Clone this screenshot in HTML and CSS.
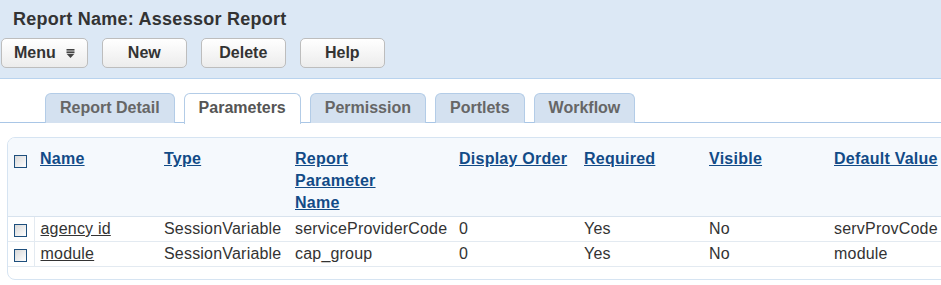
FILE: index.html
```html
<!DOCTYPE html>
<html lang="en">
<head>
    <meta charset="UTF-8">
    <meta name="viewport" content="width=device-width, initial-scale=1.0">
    <title>Report Parameters</title>
    <link rel="stylesheet" href="styles.css">
</head>
<body>
    <div class="top">
        <h1 class="title">Report Name: Assessor Report</h1>
        <div class="btns">
            <button class="btn">Menu
                <svg class="menu-ico" width="9" height="9" viewBox="0 0 9 9">
                    <rect x="0.5" y="0" width="8" height="1.6" fill="#444"/>
                    <rect x="0.5" y="2.4" width="8" height="1.6" fill="#444"/>
                    <polygon points="0.5,4.8 8.5,4.8 4.5,9" fill="#444"/>
                </svg>
            </button>
            <button class="btn">New</button>
            <button class="btn">Delete</button>
            <button class="btn">Help</button>
        </div>
    </div>

    <ul class="tabs">
        <li>Report Detail</li>
        <li class="on">Parameters</li>
        <li>Permission</li>
        <li>Portlets</li>
        <li>Workflow</li>
    </ul>

    <div class="box">
        <table class="grid">
            <thead>
                <tr>
                    <th class="ck"><span class="cb"></span></th>
                    <th class="c-name"><a href="#">Name</a></th>
                    <th class="c-type"><a href="#">Type</a></th>
                    <th class="c-rpn"><a href="#">Report<br>Parameter<br>Name</a></th>
                    <th class="c-ord"><a href="#">Display Order</a></th>
                    <th class="c-req"><a href="#">Required</a></th>
                    <th class="c-vis"><a href="#">Visible</a></th>
                    <th><a href="#">Default Value</a></th>
                </tr>
            </thead>
            <tbody>
                <tr>
                    <td class="ck"><span class="cb"></span></td>
                    <td><a href="#">agency id</a></td>
                    <td>SessionVariable</td>
                    <td>serviceProviderCode</td>
                    <td>0</td>
                    <td>Yes</td>
                    <td>No</td>
                    <td>servProvCode</td>
                </tr>
                <tr>
                    <td class="ck"><span class="cb"></span></td>
                    <td><a href="#">module</a></td>
                    <td>SessionVariable</td>
                    <td>cap_group</td>
                    <td>0</td>
                    <td>Yes</td>
                    <td>No</td>
                    <td>module</td>
                </tr>
            </tbody>
        </table>
    </div>
</body>
</html>
```

FILE: styles.css
```css
*{
    margin: 0;
    padding: 0;
    list-style: none;
    box-sizing: border-box;
}
body{
    font-family: "Liberation Sans", Arial, sans-serif;
    color: #333;
    overflow: hidden;
}
.top{
    height: 79px;
    background: #dce8f5;
    border-bottom: 1px solid #b9d3ee;
    padding: 8px 0 0 13px;
}
.title{
    font-size: 18px;
    font-weight: bold;
    line-height: 22px;
    letter-spacing: 0.25px;
    color: #333;
}
.btns{
    display: flex;
    gap: 14px;
    margin: 8px 0 0 -12px;
}
.btn{
    min-width: 85px;
    height: 30px;
    padding: 0 12px;
    border: 1px solid #bdbdbd;
    border-radius: 5px;
    background: linear-gradient(#ffffff, #ececec);
    font-family: inherit;
    font-size: 16px;
    font-weight: bold;
    color: #333;
    display: flex;
    align-items: center;
    justify-content: center;
    gap: 10px;
}
.btn:first-child{
    min-width: 86px;
    justify-content: flex-start;
    padding-left: 12px;
}
.menu-ico{
    margin-top: 1px;
}
.tabs{
    display: flex;
    gap: 9px;
    margin-top: 14px;
    padding-left: 45px;
    height: 30px;
    border-bottom: 1px solid #a9c6e6;
}
.tabs li{
    height: 30px;
    padding: 0 14px;
    background: #d4e1f0;
    border: 1px solid #b3cce7;
    border-bottom: none;
    border-radius: 6px 6px 0 0;
    font-size: 16px;
    font-weight: bold;
    line-height: 28px;
    color: #666;
}
.tabs li.on{
    background: #fff;
    height: 31px;
    color: #555;
}
.box{
    margin: 14px 0 0 7px;
    width: 1000px;
    height: 143px;
    border: 1px solid #d6e4f2;
    border-radius: 8px;
    overflow: hidden;
}
.grid{
    border-collapse: collapse;
    table-layout: fixed;
    width: 100%;
}
.grid th{
    background: #f5f9fd;
    text-align: left;
    vertical-align: top;
    font-size: 16px;
    line-height: 22px;
    letter-spacing: 0.25px;
    padding: 10px 0 2px 6px;
    border-bottom: 1px solid #d8e3ee;
}
.grid th a{
    color: #124b87;
}
.grid td{
    font-size: 16px;
    line-height: 18px;
    letter-spacing: 0.2px;
    padding: 3px 0 3px 6px;
    border-bottom: 1px solid #e3eaf1;
    white-space: nowrap;
}
.grid td a{
    color: #333;
}
.grid .ck{
    width: 26px;
    padding-left: 6px;
}
.grid td.ck{
    border-right: 1px solid #e3eaf1;
}
.grid th.ck{
    padding-top: 17px;
}
.cb{
    display: block;
    width: 13px;
    height: 13px;
    border: 1px solid #1e4f7d;
    background: linear-gradient(135deg, #d8d8d8, #ffffff);
}
td .cb{
    margin-top: 2px;
}
.c-name{ width: 124px; }
.c-type{ width: 131px; }
.c-rpn{ width: 164px; }
.c-ord{ width: 125px; }
.c-req{ width: 125px; }
.c-vis{ width: 125px; }
```
